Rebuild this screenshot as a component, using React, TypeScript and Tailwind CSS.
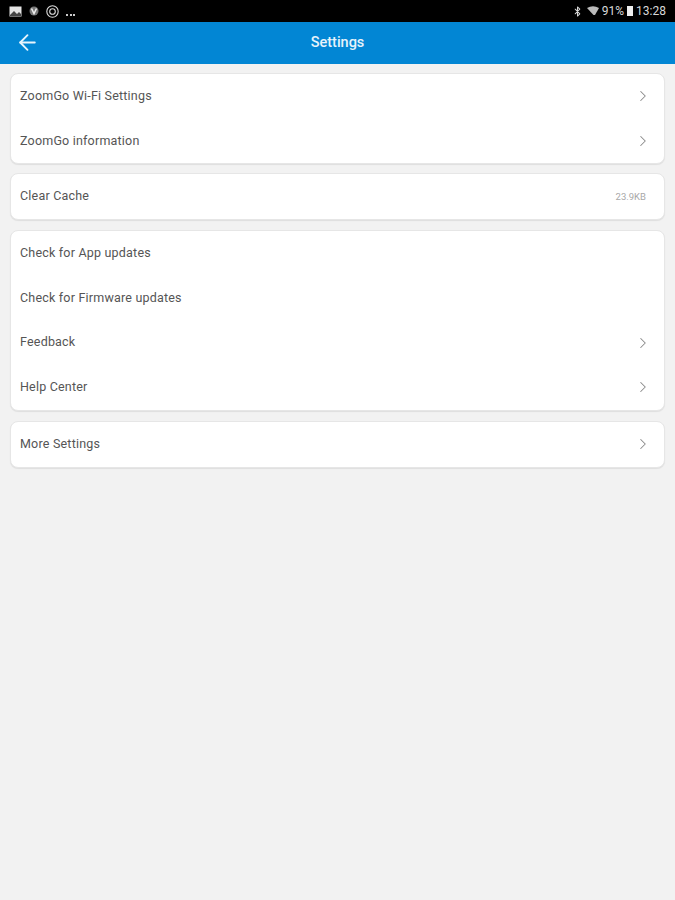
import { ChevronRight, ArrowLeft, Bluetooth } from "lucide-react";

interface SettingRow {
  label: string;
  chevron?: boolean;
  value?: string;
}

const groups: { rows: SettingRow[]; margin: string }[] = [
  {
    margin: "mt-[9px]",
    rows: [
      { label: "ZoomGo Wi-Fi Settings", chevron: true },
      { label: "ZoomGo information", chevron: true },
    ],
  },
  { margin: "mt-[9px]", rows: [{ label: "Clear Cache", value: "23.9KB" }] },
  {
    margin: "mt-[10px]",
    rows: [
      { label: "Check for App updates" },
      { label: "Check for Firmware updates" },
      { label: "Feedback", chevron: true },
      { label: "Help Center", chevron: true },
    ],
  },
  { margin: "mt-[10px]", rows: [{ label: "More Settings", chevron: true }] },
];

const Row = ({ row }: { row: SettingRow }) => (
  <div className="flex h-[44.7px] items-center justify-between pl-[9px] pr-[12px]">
    <span className="text-[12.5px] tracking-[0.2px] text-[#555555]">{row.label}</span>
    {row.chevron && <ChevronRight className="h-[18px] w-[18px] text-[#8a8a8a]" strokeWidth={1.4} />}
    {row.value && <span className="pr-[6px] text-[9.5px] text-[#a8a8a8]">{row.value}</span>}
  </div>
);

const StatusBar = () => (
  <div className="flex h-[22px] items-center justify-between bg-black pl-[9px] pr-[9px] text-[#d8d8d8]">
    <div className="flex items-center gap-[6px]">
      <svg width="13" height="11" viewBox="0 0 13 11">
        <rect x="0.5" y="0.5" width="12" height="10" fill="#e4e4e4" />
        <path d="M1 9 L5 5 L8 8 L10 6 L12 8 V10 H1 Z" fill="#444" />
      </svg>
      <svg width="12" height="12" viewBox="0 0 12 12">
        <circle cx="6" cy="6" r="4.5" fill="#777" />
        <path d="M3.5 3.5 L6 8.5 L8.5 3.5" stroke="#eee" strokeWidth="1.5" fill="none" />
      </svg>
      <svg width="13" height="13" viewBox="0 0 13 13" fill="none" stroke="#ddd">
        <circle cx="6.5" cy="6.5" r="5.7" strokeWidth="1.1" />
        <circle cx="6.5" cy="6.5" r="2.8" strokeWidth="1.1" />
      </svg>
      <div className="mt-[8px] ml-[1px] flex gap-[1.5px]">
        <span className="h-[2px] w-[2px] bg-[#ccc]" />
        <span className="h-[2px] w-[2px] bg-[#ccc]" />
        <span className="h-[2px] w-[2px] bg-[#ccc]" />
      </div>
    </div>
    <div className="flex items-center font-['Roboto',sans-serif] text-[12px]">
      <Bluetooth className="mr-[4px] h-[11px] w-[11px]" strokeWidth={2.2} />
      <svg width="12" height="10" viewBox="0 0 12 10" className="mr-[3px]">
        <path d="M0 2 Q6 -1.5 12 2 L8 9 L6.5 9 Z" fill="#bbb" />
      </svg>
      <span>91%</span>
      <span className="mx-[3px] h-[10px] w-[6px] bg-[#eee]" />
      <span>13:28</span>
    </div>
  </div>
);

export default function App() {
  return (
    <div className="flex min-h-[900px] flex-col bg-[#f2f2f2] font-['Roboto',sans-serif]">
      <StatusBar />
      <header className="relative flex h-[42px] items-center justify-center bg-[#0286d4]">
        <ArrowLeft className="absolute left-[15px] top-[8px] h-[25px] w-[25px] text-[#e8f4fc]" strokeWidth={1.8} />
        <h1 className="text-[14.5px] font-medium text-[#e6f3fb]">Settings</h1>
      </header>
      <main className="px-[10px]">
        {groups.map((group) => (
          <section
            key={group.rows[0].label}
            className={`${group.margin} rounded-[8px] border border-[#e6e6e6] bg-white shadow-[0_1px_1px_rgba(0,0,0,0.08)]`}
          >
            {group.rows.map((row) => (
              <Row key={row.label} row={row} />
            ))}
          </section>
        ))}
      </main>
    </div>
  );
}
